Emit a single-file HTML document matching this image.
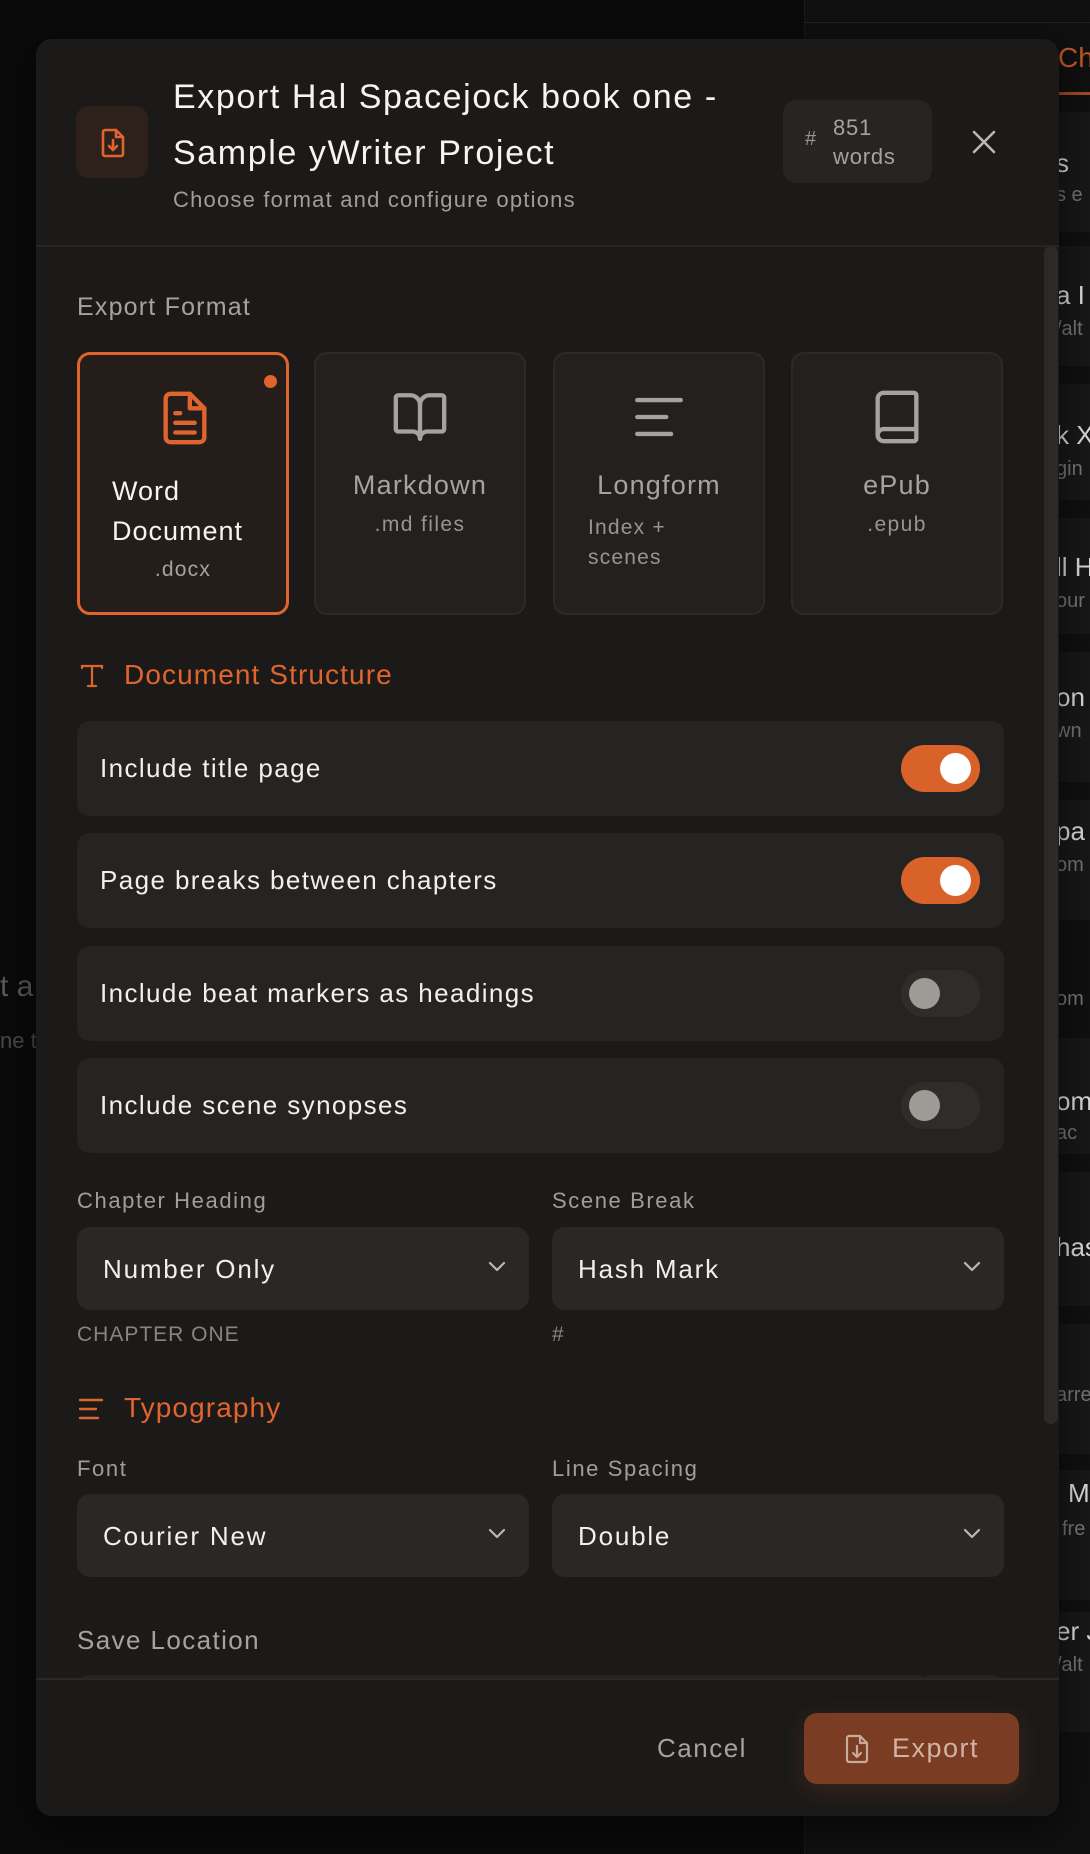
<!DOCTYPE html>
<html><head><meta charset="utf-8"><style>
*{box-sizing:border-box;margin:0;padding:0}
body{width:1090px;height:1854px;background:#0a0a0a;font-family:"Liberation Sans",sans-serif;position:relative;overflow:hidden;color:#f2efec}
.a{position:absolute;white-space:nowrap}
.side{position:absolute;left:804px;top:0;width:286px;height:1854px;background:#101010;border-left:1px solid #1a1a1a}
.item{position:absolute;left:805px;width:285px;background:#181818}
.modal{position:absolute;left:36px;top:39px;width:1023px;height:1777px;background:#1b1a19;border-radius:16px;overflow:hidden;box-shadow:0 10px 40px rgba(0,0,0,.6)}
.card{position:absolute;top:313px;width:212px;height:263px;background:#222120;border:2px solid #2b2a29;border-radius:13px}
.card .t{position:absolute;width:100%;text-align:center;font-size:27px;color:#a8a29e;letter-spacing:1.2px}
.card .s{position:absolute;width:100%;text-align:center;font-size:21px;color:#9a948f;letter-spacing:1.4px}
.row{position:absolute;left:41px;width:927px;height:95px;background:#252423;border-radius:13px}
.row .l{position:absolute;left:23px;top:32px;font-size:26px;color:#f2efec;letter-spacing:1.4px}
.tg{position:absolute;left:824px;top:24px;width:79px;height:47px;border-radius:24px;background:#2e2d2c}
.tg i{position:absolute;top:8px;width:31px;height:31px;border-radius:50%;background:#9e9a96;left:8px}
.tg.on{background:#d9622b}.tg.on i{left:auto;right:9px;background:#fff}
.lbl{position:absolute;font-size:22px;color:#a39d98;letter-spacing:1.6px}
.sel{position:absolute;width:452px;height:83px;background:#292827;border-radius:13px}
.sel span{position:absolute;left:26px;top:27px;font-size:26px;color:#f2efec;letter-spacing:1.8px}
.sel svg{position:absolute;right:22px;top:33px}
.sec{position:absolute;font-size:28px;color:#e0642e;letter-spacing:1.1px}
</style></head><body>
<div class="a" style="left:0;top:970px;font-size:30px;color:#5a5a5a">t a</div>
<div class="a" style="left:0;top:1028px;font-size:22px;color:#4a4a4a">ne t</div>
<div class="side"></div>
<div class="a" style="left:804px;top:22px;width:286px;height:1px;background:#222"></div>
<div class="a" style="left:1058px;top:42px;font-size:28px;color:#c4572a">Ch</div>
<div class="a" style="left:1058px;top:92px;width:32px;height:3px;background:#a94a22"></div>
<div class="item" style="top:112px;height:120px"></div>
<div class="item" style="top:246px;height:120px"></div>
<div class="item" style="top:384px;height:116px"></div>
<div class="item" style="top:518px;height:116px"></div>
<div class="item" style="top:652px;height:130px"></div>
<div class="item" style="top:800px;height:120px"></div>
<div class="item" style="top:1038px;height:116px"></div>
<div class="item" style="top:1172px;height:134px"></div>
<div class="item" style="top:1324px;height:130px"></div>
<div class="item" style="top:1470px;height:130px"></div>
<div class="item" style="top:1612px;height:120px"></div>
<div class="a" style="left:1056px;top:148px;font-size:26px;color:#ddd">s</div>
<div class="a" style="left:1056px;top:184px;font-size:20px;color:#777">s e</div>
<div class="a" style="left:1056px;top:280px;font-size:26px;color:#ddd">a I</div>
<div class="a" style="left:1056px;top:318px;font-size:20px;color:#777">/alt</div>
<div class="a" style="left:1056px;top:420px;font-size:26px;color:#ddd">k X</div>
<div class="a" style="left:1056px;top:458px;font-size:20px;color:#777">gin</div>
<div class="a" style="left:1056px;top:552px;font-size:26px;color:#ddd">ll H</div>
<div class="a" style="left:1056px;top:590px;font-size:20px;color:#777">our</div>
<div class="a" style="left:1056px;top:682px;font-size:26px;color:#ddd">on</div>
<div class="a" style="left:1056px;top:720px;font-size:20px;color:#777">wn</div>
<div class="a" style="left:1056px;top:816px;font-size:26px;color:#ddd">pa</div>
<div class="a" style="left:1056px;top:854px;font-size:20px;color:#777">om</div>
<div class="a" style="left:1056px;top:988px;font-size:20px;color:#777">om</div>
<div class="a" style="left:1056px;top:1086px;font-size:26px;color:#ddd">om</div>
<div class="a" style="left:1056px;top:1122px;font-size:20px;color:#777">ac</div>
<div class="a" style="left:1056px;top:1232px;font-size:26px;color:#ddd">has</div>
<div class="a" style="left:1056px;top:1384px;font-size:20px;color:#777">arre</div>
<div class="a" style="left:1068px;top:1478px;font-size:26px;color:#ddd">M</div>
<div class="a" style="left:1062px;top:1518px;font-size:20px;color:#777">fre</div>
<div class="a" style="left:1056px;top:1616px;font-size:26px;color:#ddd">er J</div>
<div class="a" style="left:1056px;top:1654px;font-size:20px;color:#777">/alt</div>

<div class="modal">
 <div class="a" style="left:40px;top:67px;width:72px;height:72px;background:#2e201b;border-radius:13px">
  <svg width="72" height="72" viewBox="0 0 72 72" fill="none" stroke="#e0642e" stroke-width="2.6" stroke-linecap="round" stroke-linejoin="round"><path d="M29 24h11l7 7v17a2 2 0 0 1-2 2H29a2 2 0 0 1-2-2V26a2 2 0 0 1 2-2z"/><path d="M40 24v7h7"/><path d="M37 34v10M33 40l4 4 4-4"/></svg>
 </div>
 <div class="a" style="left:137px;top:30px;font-size:34px;line-height:56px;color:#f6f3f0;letter-spacing:1.6px">Export Hal Spacejock book one -<br>Sample yWriter Project</div>
 <div class="a" style="left:137px;top:148px;font-size:22px;color:#a39d98;letter-spacing:1.2px">Choose format and configure options</div>
 <div class="a" style="left:747px;top:61px;width:149px;height:83px;background:#262524;border-radius:13px">
  <div class="a" style="left:22px;top:28px;font-size:20px;color:#9a948f">#</div>
  <div class="a" style="left:50px;top:13px;font-size:22px;line-height:29px;color:#a8a29e;letter-spacing:.8px">851<br>words</div>
 </div>
 <svg class="a" style="left:935px;top:90px" width="26" height="26" viewBox="0 0 26 26" stroke="#bdb7b2" stroke-width="2.6" stroke-linecap="round"><path d="M3 3l20 20M23 3L3 23"/></svg>
 <div class="a" style="left:0;top:206px;width:1023px;height:2px;background:#262524"></div>
 <div class="a" style="left:1008px;top:207px;width:14px;height:1178px;background:#2b2a29;border-radius:7px"></div>

 <div class="a" style="left:41px;top:254px;font-size:25px;color:#a8a29e;letter-spacing:1.2px">Export Format</div>

 <div class="card" style="left:41px;background:#251d1a;border:3px solid #e0642e">
  <div class="a" style="left:184px;top:20px;width:13px;height:13px;border-radius:50%;background:#e0642e"></div>
  <svg class="a" style="left:76px;top:34px" width="58" height="58" viewBox="0 0 24 24" fill="none" stroke="#e0642e" stroke-width="1.8" stroke-linecap="round" stroke-linejoin="round"><path d="M14 2H6a2 2 0 0 0-2 2v16a2 2 0 0 0 2 2h12a2 2 0 0 0 2-2V8z"/><path d="M14 2v6h6"/><path d="M8 10h2M8 14h8M8 18h8" /></svg>
  <div class="a" style="left:32px;top:116px;font-size:27px;line-height:40px;color:#f6f3f0;letter-spacing:1px">Word<br>Document</div>
  <div class="a" style="left:0;width:206px;text-align:center;top:203px;font-size:21px;color:#a8a29e;letter-spacing:1.2px">.docx</div>
 </div>
 <div class="card" style="left:278px">
  <svg class="a" style="left:75px;top:34px" width="58" height="58" viewBox="0 0 24 24" fill="none" stroke="#a8a29e" stroke-width="1.8" stroke-linecap="round" stroke-linejoin="round"><path d="M12 7v14"/><path d="M3 18a1 1 0 0 1-1-1V4a1 1 0 0 1 1-1h5a4 4 0 0 1 4 4 4 4 0 0 1 4-4h5a1 1 0 0 1 1 1v13a1 1 0 0 1-1 1h-6a3 3 0 0 0-3 3 3 3 0 0 0-3-3z"/></svg>
  <div class="t" style="top:116px">Markdown</div>
  <div class="s" style="top:159px">.md files</div>
 </div>
 <div class="card" style="left:517px">
  <svg class="a" style="left:75px;top:34px" width="58" height="58" viewBox="0 0 24 24" fill="none" stroke="#a8a29e" stroke-width="1.8" stroke-linecap="round"><path d="M3 5h18M3 12h12M3 19h14"/></svg>
  <div class="t" style="top:116px">Longform</div>
  <div class="a" style="left:33px;top:159px;font-size:21px;line-height:30px;color:#9a948f;letter-spacing:1.2px">Index +<br>scenes</div>
 </div>
 <div class="card" style="left:755px">
  <svg class="a" style="left:75px;top:34px" width="58" height="58" viewBox="0 0 24 24" fill="none" stroke="#a8a29e" stroke-width="1.8" stroke-linecap="round" stroke-linejoin="round"><path d="M4 19.5v-15A2.5 2.5 0 0 1 6.5 2H19a1 1 0 0 1 1 1v18a1 1 0 0 1-1 1H6.5a1 1 0 0 1 0-5H20"/></svg>
  <div class="t" style="top:116px">ePub</div>
  <div class="s" style="top:159px">.epub</div>
 </div>

 <svg class="a" style="left:43px;top:624px" width="26" height="26" viewBox="0 0 26 26" fill="none" stroke="#e0642e" stroke-width="2.2" stroke-linecap="round"><path d="M3 5V3h20v2M13 3v20M9 23h8"/></svg>
 <div class="sec" style="left:88px;top:620px">Document Structure</div>

 <div class="row" style="top:682px"><div class="l">Include title page</div><div class="tg on"><i></i></div></div>
 <div class="row" style="top:794px"><div class="l">Page breaks between chapters</div><div class="tg on"><i></i></div></div>
 <div class="row" style="top:907px"><div class="l">Include beat markers as headings</div><div class="tg"><i></i></div></div>
 <div class="row" style="top:1019px"><div class="l">Include scene synopses</div><div class="tg"><i></i></div></div>

 <div class="lbl" style="left:41px;top:1149px">Chapter Heading</div>
 <div class="lbl" style="left:516px;top:1149px">Scene Break</div>
 <div class="sel" style="left:41px;top:1188px"><span>Number Only</span><svg width="20" height="14" viewBox="0 0 20 14" fill="none" stroke="#bdb7b2" stroke-width="2.2" stroke-linecap="round" stroke-linejoin="round"><path d="M3 3l7 7 7-7"/></svg></div>
 <div class="sel" style="left:516px;top:1188px"><span>Hash Mark</span><svg width="20" height="14" viewBox="0 0 20 14" fill="none" stroke="#bdb7b2" stroke-width="2.2" stroke-linecap="round" stroke-linejoin="round"><path d="M3 3l7 7 7-7"/></svg></div>
 <div class="lbl" style="left:41px;top:1284px;font-size:21px;color:#8a847f;letter-spacing:1px">CHAPTER ONE</div>
 <div class="lbl" style="left:516px;top:1284px;font-size:21px;color:#8a847f">#</div>

 <svg class="a" style="left:42px;top:1357px" width="26" height="26" viewBox="0 0 26 26" fill="none" stroke="#e0642e" stroke-width="2.4" stroke-linecap="round"><path d="M2 4h22M2 13h16M2 22h18"/></svg>
 <div class="sec" style="left:88px;top:1353px">Typography</div>

 <div class="lbl" style="left:41px;top:1417px">Font</div>
 <div class="lbl" style="left:516px;top:1417px">Line Spacing</div>
 <div class="sel" style="left:41px;top:1455px"><span>Courier New</span><svg width="20" height="14" viewBox="0 0 20 14" fill="none" stroke="#bdb7b2" stroke-width="2.2" stroke-linecap="round" stroke-linejoin="round"><path d="M3 3l7 7 7-7"/></svg></div>
 <div class="sel" style="left:516px;top:1455px"><span>Double</span><svg width="20" height="14" viewBox="0 0 20 14" fill="none" stroke="#bdb7b2" stroke-width="2.2" stroke-linecap="round" stroke-linejoin="round"><path d="M3 3l7 7 7-7"/></svg></div>

 <div class="a" style="left:41px;top:1586px;font-size:26px;color:#a8a29e;letter-spacing:1.4px">Save Location</div>
 <div class="a" style="left:41px;top:1636px;width:854px;height:40px;background:#252423;border-radius:13px 13px 0 0"></div>
 <div class="a" style="left:882px;top:1636px;width:86px;height:40px;background:#252423;border-radius:13px 13px 0 0"></div>

 <div class="a" style="left:0;top:1639px;width:1023px;height:138px;background:#1b1a19;border-top:2px solid #2a2928"></div>
 <div class="a" style="left:621px;top:1694px;font-size:26px;color:#a8a29e;letter-spacing:1.5px">Cancel</div>
 <div class="a" style="left:768px;top:1674px;width:215px;height:71px;background:#7a3c22;border-radius:13px;box-shadow:0 6px 24px rgba(200,90,40,.18)">
  <svg class="a" style="left:40px;top:21px" width="26" height="30" viewBox="0 0 26 30" fill="none" stroke="#c9a999" stroke-width="2.2" stroke-linecap="round" stroke-linejoin="round"><path d="M5 2h11l7 7v17a2 2 0 0 1-2 2H5a2 2 0 0 1-2-2V4a2 2 0 0 1 2-2z"/><path d="M16 2v7h7"/><path d="M13 12v11M9 19l4 4 4-4"/></svg>
  <div class="a" style="left:88px;top:20px;font-size:27px;color:#d2b3a3;letter-spacing:1.5px">Export</div>
 </div>
</div>
</body></html>
